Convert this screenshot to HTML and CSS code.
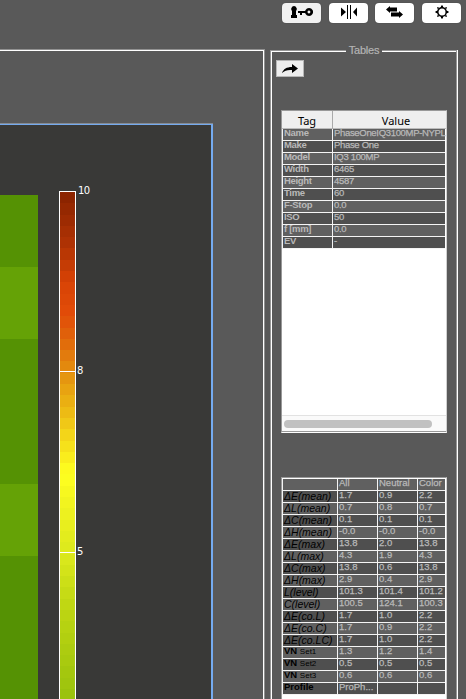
FILE: index.html
```html
<!DOCTYPE html>
<html lang="en">
<head>
<meta charset="utf-8">
<title>Chart Inspector</title>
<link rel="stylesheet" href="styles.css">
</head>
<body>
<div class="app">
  <header class="toolbar">
    <button class="tool tool-active" aria-label="Key"><svg width="22" height="12" viewBox="0 0 22 12"><path d="M3 0a3 3 0 0 1 2 5v4h1v3H0V9h1V5a3 3 0 0 1 2-5z"/><path d="M7 5h8v2h-4v2H9V7H7z"/><path fill-rule="evenodd" d="M18 2a4 4 0 1 0 .1 0zM18 4.600a1.400 1.400 0 1 1-.1 0z"/></svg></button>
    <button class="tool" aria-label="Split"><svg width="16" height="14" viewBox="0 0 16 14"><path d="M0 2.500l5 4.500-5 4.500zM16 2.500L12 7l4 4.500zM6 0h1v14H6zM9 0h1v14H9z"/></svg></button>
    <button class="tool tool-swap" aria-label="Swap"><svg width="17" height="12" viewBox="0 0 17 12"><path d="M0 3.500L4 0v1.500h7v4H4V7zM17 8.500L13 12v-1.500H5v-4h8V5z"/></svg></button>
    <button class="tool" aria-label="Settings"><svg width="14" height="14" viewBox="0 0 14 14"><circle cx="7" cy="7" r="4.200" fill="none" stroke="#000" stroke-width="1.400"/><path d="M6.200 .5h1.600L8.400 3H5.600zM6.200 13.500h1.600l.6-2.500H5.600zM.5 6.200v1.600L3 8.400V5.600zM13.500 6.200v1.600L11 8.400V5.600zM2 2l2.500.8-1.700 1.700zM12 2l-2.500.8 1.700 1.700zM2 12l2.500-.8-1.700-1.700zM12 12l-2.500-.8 1.700-1.700z"/></svg></button>
  </header>
  <main class="panes">
    <section class="chart-frame">
      <div class="chart">
        <div class="patches"><i class="p1"></i><i class="p2"></i><i class="p3"></i><i class="p4"></i><i class="p5"></i></div>
        <div class="scale" id="scale"></div>
        <div class="labels"><span class="l10">10</span><span class="l8">8</span><span class="l5">5</span></div>
      </div>
    </section>
    <section class="tables">
      <span class="legend">Tables</span>
      <button class="share" aria-label="Share"><svg width="16" height="10" viewBox="0 0 16 10"><path d="M0 9C1.500 5 4.500 3 10 3V0l6 4.500L10 9V6C6 5.500 2.500 6.500 0 9z"/></svg></button>
      <div class="box box-tags">
        <div class="head"><span>Tag</span><span>Value</span></div>
        <div class="grid grid-tags" id="tags"></div>
        <div class="track"><div class="thumb"></div></div>
      </div>
      <div class="box box-stats">
        <div class="grid grid-stats" id="stats"></div>
      </div>
    </section>
  </main>
</div>
<script src="app.js"></script>
</body>
</html>
```
FILE: styles.css
```css
* { box-sizing: border-box; }
body { margin: 0; background: #595959; font-family: "Liberation Sans", sans-serif; }
.app { width: 466px; height: 699px; overflow: hidden; display: flex; flex-direction: column; }
.toolbar { height: 49px; flex: none; display: flex; justify-content: flex-end; gap: 8px; padding: 3px 5px 0 0; }
.tool { width: 39px; height: 20px; padding: 0; border: 0; border-radius: 4px; background: #fff; display: flex; align-items: center; justify-content: center; box-shadow: 0 0 1px #333; }
.tool svg { margin-top: -2px; }
.tool-active { background: #f1f1f1; }
.tool-swap { margin-left: -1px; }
.panes { flex: 1; min-height: 0; display: flex; }
.chart-frame { width: 265px; border-top: 1px solid #919191; border-right: 1px solid #919191; box-shadow: inset -1px 1px #fff; padding-top: 74px; }
.chart { width: 213px; height: 580px; background: #393937; border-top: 1px solid #75abf0; border-right: 2px solid #75abf0; box-shadow: 0 -1px #858b93; display: flex; align-items: flex-start; }
.patches { width: 38px; margin-top: 70px; display: flex; flex-direction: column; }
.patches i { background: #559204; }
.patches .p1, .patches .p2, .patches .p4 { height: 72px; }
.patches .p2, .patches .p4 { background: #65a206; }
.patches .p3 { height: 145px; }
.patches .p5 { height: 150px; }
.scale { width: 17px; height: 520px; margin: 66px 0 0 21px; border: 1px solid #fff; position: relative; overflow: hidden; }
.scale i { display: block; height: 11.300px; }
.scale b { position: absolute; left: 0; right: 0; height: 1px; background: #fff; }
.scale .t8 { top: 179px; }
.scale .t5 { top: 360px; }
.labels { margin: 59px 0 0 1px; width: 20px; display: flex; flex-direction: column; color: #fff; font: 10px/14px "DejaVu Sans", sans-serif; letter-spacing: -.6px; }
.labels .l10 { padding-left: 1px; }
.labels .l8 { margin-top: 166px; }
.labels .l5 { margin-top: 167px; }
.tables { position: relative; margin: 1px 0 0 5px; width: 187px; height: 670px; padding: 9px 0 0 4px; border: 1px solid #979797; border-bottom: 0; box-shadow: inset 1px 1px #fff, 1px 0 #fff; }
.legend { position: absolute; left: 75px; top: -8px; width: 36px; height: 14px; background: #595959; color: #b4b4b4; text-align: center; font-size: 11px; line-height: 14px; letter-spacing: -.2px; -webkit-text-stroke: .2px currentColor; }
.share { width: 28px; height: 17px; margin-left: 1px; padding: 0; background: #eee; border: 1px solid #b7b7b7; display: flex; align-items: center; justify-content: center; }
.box { width: 166px; margin-left: 6px; background: #fff; border-top: 1px solid #999; border-left: 1px solid #999; border-right: 1px solid #d0d0d0; }
.box-tags { height: 323px; margin-top: 33px; border-bottom: 1px solid #fff; box-shadow: inset 0 -1px #999; display: flex; flex-direction: column; }
.box-stats { height: 260px; margin-top: 44px; }
.head { height: 18px; display: grid; grid-template-columns: 50px 1fr; background: #efefef; color: #000; font: 11px/19px "Noto Sans", sans-serif; text-align: center; border-bottom: 1px solid #bbb; }
.head span + span { border-left: 1px solid #aaa; padding-left: 13px; }
.grid { display: grid; grid-auto-rows: 12px; padding-right: 1px; color: #b9b9b9; font-size: 9.500px; line-height: 8px; -webkit-text-stroke: .25px currentColor; }
.grid span { padding-left: 1px; border-bottom: 1px solid #f4f4f4; border-left: 1px solid #f4f4f4; background: #606060; white-space: nowrap; }
.grid .dark { background: #4f4f4f; }
.grid-tags { grid-template-columns: 50px 113px; letter-spacing: -.32px; }
.grid-tags .name { font-weight: bold; -webkit-text-stroke: 0; }
.grid-stats { grid-template-columns: 55px 40px 40px 28px; border-top: 1px solid #fff; line-height: 7px; }
.grid-stats .name { color: #000; font-style: italic; font-size: 10.500px; line-height: 10px; -webkit-text-stroke: 0; }
.grid-stats .name.plain { font-style: normal; font-weight: bold; font-size: 9.500px; line-height: 8px; }
.grid-stats small { font-size: 8px; font-weight: normal; }
.track { height: 16px; margin: auto 0 1px; padding: 4px 2px; border-top: 1px solid #e2e2e2; background: #fafafa; }
.thumb { width: 148px; height: 8px; border-radius: 4px; background: #c1c1c1; }
```
FILE: app.js
```js
// Gradient stops of the colour scale: [y offset, r, g, b]
const stops = [[0,140,36,0],[50,178,52,4],[85,216,67,5],[116,226,76,8],[140,224,100,10],[174,228,143,15],[208,235,180,19],[242,244,218,26],[276,255,255,32],[310,240,242,31],[360,218,232,28],[410,190,214,18],[515,148,190,12]];
function colorAt(y) {
  let i = 1;
  while (i < stops.length - 1 && stops[i][0] < y) i++;
  const a = stops[i - 1], b = stops[i], t = (y - a[0]) / (b[0] - a[0]);
  return "rgb(" + [1, 2, 3].map(k => Math.round(a[k] + (b[k] - a[k]) * t)).join(",") + ")";
}
const scale = document.getElementById("scale");
for (let n = 0; n < 45; n++) {
  const band = document.createElement("i");
  band.style.background = colorAt(n * 11.3);
  scale.append(band);
}
for (const t of ["t8", "t5"]) {
  const tick = document.createElement("b");
  tick.className = t;
  scale.append(tick);
}
function fill(id, rows) {
  document.getElementById(id).innerHTML = rows.map((row, r) => row.map((cell, c) => {
    const cls = [r % 2 ? "dark" : "", c ? "" : "name", !c && /^(VN|Profile)/.test(cell) ? "plain" : ""].join(" ").trim();
    return `<span class="${cls}">${cell}</span>`;
  }).join("")).join("");
}
fill("tags", [
  ["Name", "PhaseOneIQ3100MP-NYPL"], ["Make", "Phase One"], ["Model", "IQ3 100MP"],
  ["Width", "6465"], ["Height", "4587"], ["Time", "60"], ["F-Stop", "0.0"],
  ["ISO", "50"], ["f [mm]", "0.0"], ["EV", "-"]
]);
fill("stats", [
  ["", "All", "Neutral", "Color"],
  ["ΔE(mean)", "1.7", "0.9", "2.2"],
  ["ΔL(mean)", "0.7", "0.8", "0.7"],
  ["ΔC(mean)", "0.1", "0.1", "0.1"],
  ["ΔH(mean)", "-0.0", "-0.0", "-0.0"],
  ["ΔE(max)", "13.8", "2.0", "13.8"],
  ["ΔL(max)", "4.3", "1.9", "4.3"],
  ["ΔC(max)", "13.8", "0.6", "13.8"],
  ["ΔH(max)", "2.9", "0.4", "2.9"],
  ["L(level)", "101.3", "101.4", "101.2"],
  ["C(level)", "100.5", "124.1", "100.3"],
  ["ΔE(co.L)", "1.7", "1.0", "2.2"],
  ["ΔE(co.C)", "1.7", "0.9", "2.2"],
  ["ΔE(co.LC)", "1.7", "1.0", "2.2"],
  ["VN <small>Set1</small>", "1.3", "1.2", "1.4"],
  ["VN <small>Set2</small>", "0.5", "0.5", "0.5"],
  ["VN <small>Set3</small>", "0.6", "0.6", "0.6"],
  ["Profile", "ProPh...", "", ""]
]);
```
